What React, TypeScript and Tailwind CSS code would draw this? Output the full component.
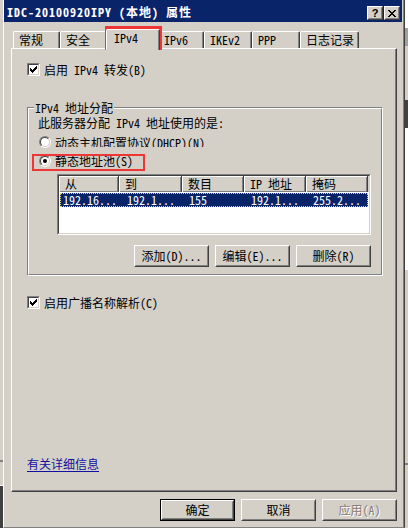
import type { ReactNode } from "react";

function Raised({ className = "", children }: { className?: string; children?: ReactNode }) {
  return (
    <div className={`border border-t-white border-l-white border-r-[#404040] border-b-[#404040] ${className}`}>
      <div className="flex h-full w-full items-center justify-center border border-t-[#d4d0c8] border-l-[#d4d0c8] border-r-[#808080] border-b-[#808080]">
        {children}
      </div>
    </div>
  );
}

function Button({ label, primary, disabled }: { label: string; primary?: boolean; disabled?: boolean }) {
  return (
    <div className={`h-[22px] w-[75px] ${primary ? "border border-black" : ""}`}>
      <Raised className="h-full w-full">
        <span className={`leading-[14px] ${disabled ? "text-[#808080] [text-shadow:1px_1px_0_#fff]" : ""}`}>{label}</span>
      </Raised>
    </div>
  );
}

function CheckBox() {
  const cols = [
    [1, 3],
    [2, 4],
    [3, 5],
    [4, 4],
    [5, 3],
    [6, 2],
    [7, 1],
  ];
  return (
    <div className="h-[13px] w-[13px] shrink-0 border border-t-[#808080] border-l-[#808080] border-r-white border-b-white">
      <div className="h-full w-full border border-t-[#404040] border-l-[#404040] border-r-[#d4d0c8] border-b-[#d4d0c8] bg-white">
        <svg width="9" height="9" viewBox="0 0 9 9" shapeRendering="crispEdges" className="block">
          {cols.map(([x, y]) => (
            <rect key={x} x={x} y={y} width="1" height="3" fill="#000" />
          ))}
        </svg>
      </div>
    </div>
  );
}

function Radio({ on }: { on?: boolean }) {
  return (
    <div className="h-[12px] w-[12px] shrink-0 rounded-full border border-t-[#808080] border-l-[#808080] border-r-white border-b-white">
      <div className="flex h-full w-full items-center justify-center rounded-full border border-t-[#404040] border-l-[#404040] border-r-[#d4d0c8] border-b-[#d4d0c8] bg-white">
        {on && <div className="h-[4px] w-[4px] rounded-full bg-black" />}
      </div>
    </div>
  );
}

function CloseGlyph() {
  const rows = [[0, 6], [1, 5], [2, 4], [3], [2, 4], [1, 5], [0, 6]];
  return (
    <svg width="8" height="7" viewBox="0 0 8 7" shapeRendering="crispEdges" className="block">
      {rows.map((xs, y) => xs.map((x) => <rect key={`${y}-${x}`} x={x} y={y} width="2" height="1" fill="#000" />))}
    </svg>
  );
}

const tabs = [
  { label: "常规", w: "w-[47px]" },
  { label: "安全", w: "w-[48px]" },
  { label: "IPv4", w: "w-[54px]", active: true },
  { label: "IPv6", w: "w-[46px]" },
  { label: "IKEv2", w: "w-[48px]" },
  { label: "PPP", w: "w-[48px]" },
  { label: "日志记录", w: "w-[59px]" },
];

const headers = [
  { label: "从", w: "w-[60px]" },
  { label: "到", w: "w-[63px]" },
  { label: "数目", w: "w-[62px]" },
  { label: "IP 地址", w: "w-[62px]" },
  { label: "掩码", w: "w-[62px]" },
];

const row = [
  { v: "192.16...", c: "w-[58px] pl-[2px]" },
  { v: "192.1...", c: "w-[63px] pl-[8px]" },
  { v: "155", c: "w-[62px] pl-[7px]" },
  { v: "192.1...", c: "w-[62px] pl-[7px]" },
  { v: "255.2...", c: "w-[61px] pl-[7px]" },
];

function ListView() {
  return (
    <div className="ml-[28px] mt-[7px] h-[61px] w-[314px] border border-t-[#808080] border-l-[#808080] border-r-white border-b-white">
      <div className="h-full w-full overflow-hidden border border-t-[#404040] border-l-[#404040] border-r-[#d4d0c8] border-b-[#d4d0c8] bg-white">
        <div className="flex h-[16px] bg-[#d4d0c8]">
          {headers.map((h) => (
            <div
              key={h.label}
              className={`${h.w} flex h-full items-center border-r border-r-[#404040] pl-[6px] leading-[14px] shadow-[inset_1px_1px_0_#fff,inset_-1px_-1px_0_#808080]`}
            >
              {h.label}
            </div>
          ))}
        </div>
        <div className="ml-[1px] mt-[1px] flex h-[14px] w-[308px] items-center border border-dotted border-[#e8d070] bg-[#0a246a] leading-[12px] text-white">
          {row.map((c, i) => (
            <div key={i} className={`${c.c} whitespace-nowrap`}>
              {c.v}
            </div>
          ))}
        </div>
      </div>
    </div>
  );
}

function GroupBox() {
  return (
    <div className="relative mt-[31px] h-[169px] w-[356px] border border-t-[#808080] border-l-[#808080] border-r-white border-b-white">
      <div className="flex h-full w-full flex-col border border-t-white border-l-white border-r-[#808080] border-b-[#808080]">
        <div className="mt-[7px] pl-[9px] leading-[14px]">此服务器分配 IPv4 地址使用的是:</div>
        <div className="mt-[6px] flex h-[13px] items-start gap-[4px] pl-[10px]">
          <Radio />
          <span className="block h-[11px] overflow-hidden leading-[13px]">动态主机配置协议(DHCP)(N)</span>
        </div>
        <div className="mt-[5px] flex h-[13px] items-center gap-[4px] pl-[10px]">
          <Radio on />
          <span className="leading-[13px]">静态地址池(S)</span>
        </div>
        <ListView />
        <div className="ml-[28px] mt-[10px] flex w-[314px] justify-end gap-[6px]">
          <Button label="添加(D)..." />
          <Button label="编辑(E)..." />
          <Button label="删除(R)" />
        </div>
      </div>
      <div className="absolute left-[6px] top-[-7px] bg-[#d4d0c8] px-[1px] leading-[14px]">IPv4 地址分配</div>
    </div>
  );
}

export default function App() {
  return (
    <div className="relative flex h-[528px] w-[408px] overflow-hidden bg-[#d4d0c8] text-[12px] text-black [font-family:'Noto_Sans_Mono_CJK_SC','Noto_Sans_CJK_SC',sans-serif]">
      {/* background left */}
      <div className="flex w-[3px] flex-col">
        <div className="h-[460px] bg-[#d4d0c8]" />
        <div className="h-[2px] bg-[#808080]" />
        <div className="h-[23px] bg-[#d4d0c8]" />
        <div className="h-[1px] bg-white" />
        <div className="flex-1 bg-[#404040]" />
      </div>

      {/* dialog */}
      <div className="flex h-[528px] w-[402px] flex-col border-b border-l border-r border-b-[#808080] border-l-white border-r-[#404040] shadow-[inset_-1px_0_0_#808080]">
        <div className="mr-[2px] flex h-[22px] items-start justify-between bg-[#0a246a]">
          <span className="pl-[3px] pt-[5px] text-[12px] font-bold leading-[14px] tracking-[1px] text-white">
            IDC-20100920IPY (本地) 属性
          </span>
          <div className="flex gap-[1px] pr-[2px] pt-[6px]">
            <Raised className="h-[14px] w-[16px] bg-[#d4d0c8]">
              <span className="text-[11px] font-bold leading-[10px] [font-family:'Liberation_Sans',sans-serif]">?</span>
            </Raised>
            <Raised className="h-[14px] w-[16px] bg-[#d4d0c8]">
              <CloseGlyph />
            </Raised>
          </div>
        </div>

        <div className="mt-[7px] flex h-[19px] items-end pl-[9px]">
          {tabs.map((t) =>
            t.active ? (
              <div
                key={t.label}
                className={`${t.w} relative z-10 -mx-[2px] -mb-[2px] flex h-[21px] items-start rounded-t-[2px] border-l border-r border-t border-l-white border-r-[#404040] border-t-white bg-[#d4d0c8] pl-[7px] pt-[1px] leading-[14px] shadow-[inset_-1px_0_0_#808080]`}
              >
                {t.label}
              </div>
            ) : (
              <div
                key={t.label}
                className={`${t.w} flex h-[17px] items-center rounded-t-[2px] border-l border-r border-t border-l-white border-r-[#404040] border-t-white pl-[5px] leading-[14px] shadow-[inset_-1px_0_0_#808080]`}
              >
                {t.label}
              </div>
            )
          )}
        </div>

        <div className="ml-[7px] flex h-[444px] w-[386px] flex-col border border-t-white border-l-white border-r-[#404040] border-b-[#404040] pl-[15px] shadow-[inset_-1px_-1px_0_#808080]">
          <div className="mt-[14px] flex h-[13px] items-center gap-[4px]">
            <CheckBox />
            <span className="leading-[13px]">启用 IPv4 转发(B)</span>
          </div>
          <GroupBox />
          <div className="mt-[20px] flex h-[13px] items-center gap-[4px]">
            <CheckBox />
            <span className="leading-[13px]">启用广播名称解析(C)</span>
          </div>
          <div className="mt-[148px] leading-[14px]">
            <span className="text-[#1010a0] underline underline-offset-[2px]">有关详细信息</span>
          </div>
        </div>

        <div className="mt-[7px] flex justify-end gap-[6px] pr-[7px]">
          <Button label="确定" primary />
          <Button label="取消" />
          <Button label="应用(A)" disabled />
        </div>
      </div>

      {/* background right */}
      <div className="flex w-[3px] flex-col">
        <div className="h-[28px] bg-white" />
        <div className="h-[18px] bg-[#a0a0a0]" />
        <div className="h-[54px] bg-[#d4d0c8]" />
        <div className="h-[28px] bg-[#404040]" />
        <div className="h-[142px] bg-white" />
        <div className="h-[193px] bg-[#d4d0c8]" />
        <div className="h-[2px] bg-[#808080]" />
        <div className="flex-1 bg-[#d4d0c8]" />
      </div>

      {/* red annotation frames */}
      <div className="pointer-events-none absolute left-[105px] top-[26px] h-[24px] w-[57px] border-[3px] border-[#ee3636]" />
      <div className="pointer-events-none absolute left-[32px] top-[154px] h-[17px] w-[113px] border-2 border-[#ee3636]" />
    </div>
  );
}
